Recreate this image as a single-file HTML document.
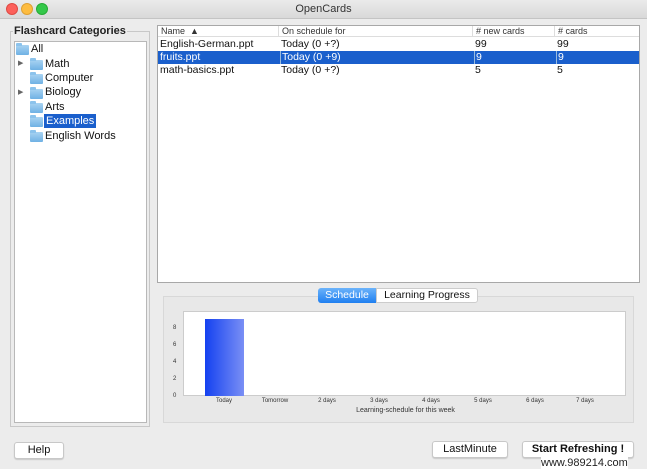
<!DOCTYPE html>
<html><head><style>
*{margin:0;padding:0;box-sizing:border-box}
body{width:647px;height:469px;background:#ececec;font-family:"Liberation Sans","DejaVu Sans",sans-serif;font-size:11px;color:#111;position:relative;overflow:hidden}
.a{position:absolute}
.dot{position:absolute;top:3px;width:12px;height:12px;border-radius:50%}
.row{position:absolute;left:158px;width:481px;height:13px;font-size:10.5px;line-height:13px}
.row span{position:absolute;top:0}
.ti{position:absolute;left:30px;height:14px;line-height:14px;font-size:11px}
.fold{position:absolute;width:13px;height:10px;background:linear-gradient(#a9d3f2,#6fb1e4);border-radius:1px}
.fold:before{content:"";position:absolute;left:0;top:-2px;width:6px;height:3px;background:#8cc3ec;border-radius:1px 1px 0 0}
.btn{position:absolute;height:17px;background:#fff;border:1px solid #c8c8c8;border-radius:3px;font-size:11px;text-align:center;line-height:15px;box-shadow:0 1px 1px rgba(0,0,0,.15)}
.yl{position:absolute;left:173px;font-size:6px;color:#333}
.xl{position:absolute;top:398px;font-size:6px;color:#333;width:50px;text-align:center}
</style></head><body>
<div class="a" style="left:0;top:0;width:647px;height:19px;background:linear-gradient(#ebebeb,#d9d9d9);border-bottom:1px solid #c4c4c4"></div>
<div class="dot" style="left:6px;background:#fc605b;border:1px solid #de4a43"></div>
<div class="dot" style="left:21px;background:#fdbc40;border:1px solid #dea034"></div>
<div class="dot" style="left:36px;background:#34c84a;border:1px solid #27aa35"></div>
<div class="a" style="left:0;width:647px;top:3px;text-align:center;font-size:11px;color:#333">OpenCards</div>

<div class="a" style="left:10px;top:31px;width:140px;height:396px;border:1px solid #c8c8c8"></div>
<div class="a" style="left:13px;top:25px;background:#ececec;padding:0 1px;font-size:11px;font-weight:bold;color:#222">Flashcard Categories</div>
<div class="a" style="left:14px;top:41px;width:133px;height:382px;background:#fff;border:1px solid #b8b8b8"></div>
<div class="fold" style="left:16px;top:45px"></div><div class="ti" style="left:31px;top:42px">All</div>
<div class="a" style="left:18px;top:59px;font-size:7px;color:#666">▶</div><div class="fold" style="left:30px;top:60px"></div><div class="ti" style="left:45px;top:57px">Math</div>
<div class="fold" style="left:30px;top:74px"></div><div class="ti" style="left:45px;top:71px">Computer</div>
<div class="a" style="left:18px;top:88px;font-size:7px;color:#666">▶</div><div class="fold" style="left:30px;top:89px"></div><div class="ti" style="left:45px;top:85px">Biology</div>
<div class="fold" style="left:30px;top:103px"></div><div class="ti" style="left:45px;top:100px">Arts</div>
<div class="fold" style="left:30px;top:117px"></div><div class="ti" style="left:44px;top:114px;background:#1a5fcc;color:#fff;padding:0 2px">Examples</div>
<div class="fold" style="left:30px;top:132px"></div><div class="ti" style="left:45px;top:129px">English Words</div>

<div class="a" style="left:157px;top:25px;width:483px;height:258px;background:#fff;border:1px solid #a8a8a8"></div>
<div class="row" style="top:26px;height:11px;font-size:9px;line-height:11px;border-bottom:1px solid #ddd;color:#333">
<span style="left:3px">Name &nbsp;▲</span><span style="left:120px;border-left:1px solid #ddd;padding-left:3px">On schedule for</span><span style="left:314px;border-left:1px solid #ddd;padding-left:3px">#&nbsp;new cards</span><span style="left:396px;border-left:1px solid #ddd;padding-left:3px">#&nbsp;cards</span></div>
<div class="row" style="top:38px"><span style="left:2px">English-German.ppt</span><span style="left:123px">Today (0 +?)</span><span style="left:317px">99</span><span style="left:399px">99</span></div>
<div class="row" style="top:51px;background:#1a5fcc;color:#fff"><span style="left:2px">fruits.ppt</span><span style="left:122px;border-left:1px solid #9bd;padding-left:1px">Today (0 +9)</span><span style="left:316px;border-left:1px solid #9bd;padding-left:1px">9</span><span style="left:398px;border-left:1px solid #9bd;padding-left:1px">9</span></div>
<div class="row" style="top:64px"><span style="left:2px">math-basics.ppt</span><span style="left:123px">Today (0 +?)</span><span style="left:317px">5</span><span style="left:399px">5</span></div>

<div class="a" style="left:163px;top:296px;width:471px;height:127px;border:1px solid #d8d8d8;background:#e8e8e8"></div>
<div class="a" style="left:318px;top:288px;width:58px;height:15px;background:linear-gradient(#6cb3fa,#1f7ff0);border-radius:3px 0 0 3px;color:#fff;font-size:10.5px;text-align:center;line-height:15px">Schedule</div>
<div class="a" style="left:376px;top:288px;width:102px;height:15px;background:#fff;border:1px solid #ccc;border-radius:0 3px 3px 0;font-size:10.5px;text-align:center;line-height:13px">Learning Progress</div>

<div class="a" style="left:183px;top:311px;width:443px;height:85px;background:#fff;border:1px solid #ccc"></div>
<div class="a" style="left:205px;top:319px;width:39px;height:77px;background:linear-gradient(90deg,#1441f0,#7a8ff5)"></div>
<div class="yl" style="top:325px">8</div><div class="yl" style="top:342px">6</div><div class="yl" style="top:359px">4</div><div class="yl" style="top:376px">2</div><div class="yl" style="top:393px">0</div>
<div class="xl" style="left:199px">Today</div><div class="xl" style="left:250px">Tomorrow</div><div class="xl" style="left:302px">2 days</div><div class="xl" style="left:354px">3 days</div><div class="xl" style="left:406px">4 days</div><div class="xl" style="left:458px">5 days</div><div class="xl" style="left:510px">6 days</div><div class="xl" style="left:560px">7 days</div>
<div class="a" style="left:184px;width:443px;top:407px;text-align:center;font-size:7px;color:#333">Learning-schedule for this week</div>

<div class="btn" style="left:14px;top:442px;width:50px">Help</div>
<div class="btn" style="left:432px;top:441px;width:76px">LastMinute</div>
<div class="btn" style="left:522px;top:441px;width:112px;font-weight:bold">Start Refreshing !</div>
<div class="a" style="left:541px;top:457px;font-size:11px;color:#222;background:#fff">www.989214.com</div>
</body></html>
